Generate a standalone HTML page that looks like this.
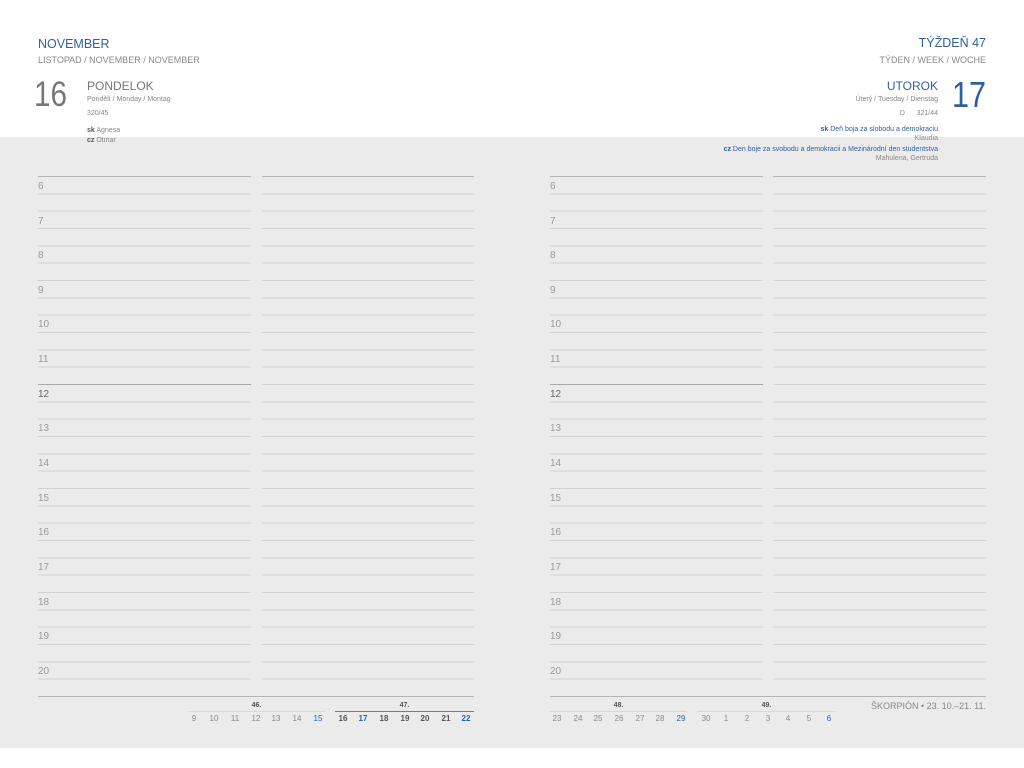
<!DOCTYPE html>
<html><head><meta charset="utf-8"><style>
*{margin:0;padding:0;box-sizing:border-box}
body{width:1024px;height:768px;position:relative;background:#fff;font-family:"Liberation Sans",sans-serif;overflow:hidden;color:#777}
.gray{position:absolute;left:0;top:137px;width:1024px;height:611px;background:#ebebeb}
.a{position:absolute;white-space:nowrap}
.blue{color:#2e5fa3}
.col{position:absolute;top:176px;height:521px;background:repeating-linear-gradient(to bottom,#d2d2d2 0,#d2d2d2 1px,transparent 1px,transparent 17.333px)}
.top{position:absolute;height:1px;background:#b4b4b4}
.hr{position:absolute;font-size:10px;color:#999}
.d{position:absolute;font-size:8px;width:20px;text-align:center;color:#888}
.b{font-weight:bold;color:#555}
.bl{color:#2e5fa3}
</style></head><body>
<div class="gray"></div>
<div class="a blue" style="left:38px;top:37px;font-size:12.5px">NOVEMBER</div>
<div class="a" style="left:38px;top:55px;font-size:9px;color:#888">LISTOPAD / NOVEMBER / NOVEMBER</div>
<div class="a" style="left:34px;top:75px;font-size:35px;color:#777;transform:scaleX(0.85);transform-origin:left">16</div>
<div class="a" style="left:87px;top:79px;font-size:12px;color:#777">PONDELOK</div>
<div class="a" style="left:87px;top:96px;font-size:7px;color:#888">Pondělí / Monday / Montag</div>
<div class="a" style="left:87px;top:110px;font-size:7px;color:#888">320/45</div>
<div class="a" style="left:87px;top:127px;font-size:7px;color:#888"><b style="color:#555">sk</b> Agnesa</div>
<div class="a" style="left:87px;top:137px;font-size:7px;color:#888"><b style="color:#555">cz</b> Otmar</div>

<div class="a blue" style="right:38px;top:36px;font-size:12.5px">TÝŽDEŇ 47</div>
<div class="a" style="right:38px;top:55px;font-size:9px;color:#888">TÝDEN / WEEK / WOCHE</div>
<div class="a blue" style="right:38px;top:74px;font-size:36px;transform:scaleX(0.85);transform-origin:right">17</div>
<div class="a blue" style="right:86px;top:79px;font-size:12px">UTOROK</div>
<div class="a" style="right:86px;top:96px;font-size:7px;color:#888">Úterý / Tuesday / Dienstag</div>
<div class="a" style="right:86px;top:110px;font-size:7px;color:#888">D&nbsp;&nbsp;&nbsp;&nbsp;&nbsp;&nbsp;321/44</div>
<div class="a blue" style="right:86px;top:126px;font-size:7px"><b>sk</b> Deň boja za slobodu a demokraciu</div>
<div class="a" style="right:86px;top:135px;font-size:7px;color:#888">Klaudia</div>
<div class="a blue" style="right:86px;top:146px;font-size:7px"><b>cz</b> Den boje za svobodu a demokracii a Mezinárodní den studentstva</div>
<div class="a" style="right:86px;top:155px;font-size:7px;color:#888">Mahulena, Gertruda</div>

<div class="col" style="left:38px;width:213px"></div>
<div class="col" style="left:262px;width:212px"></div>
<div class="col" style="left:550px;width:213px"></div>
<div class="col" style="left:773px;width:213px"></div>
<div class="top" style="left:38px;top:176px;width:213px"></div>
<div class="top" style="left:262px;top:176px;width:212px"></div>
<div class="top" style="left:550px;top:176px;width:213px"></div>
<div class="top" style="left:773px;top:176px;width:213px"></div>
<div class="top" style="left:38px;top:384px;width:213px;background:#a8a8a8"></div>
<div class="top" style="left:550px;top:384px;width:213px;background:#a8a8a8"></div>
<div class="top" style="left:38px;top:696px;width:436px"></div>
<div class="top" style="left:550px;top:696px;width:436px"></div>

<div class="hr" style="left:38px;top:181px">6</div><div class="hr" style="left:550px;top:181px">6</div>
<div class="hr" style="left:38px;top:216px">7</div><div class="hr" style="left:550px;top:216px">7</div>
<div class="hr" style="left:38px;top:250px">8</div><div class="hr" style="left:550px;top:250px">8</div>
<div class="hr" style="left:38px;top:285px">9</div><div class="hr" style="left:550px;top:285px">9</div>
<div class="hr" style="left:38px;top:319px">10</div><div class="hr" style="left:550px;top:319px">10</div>
<div class="hr" style="left:38px;top:354px">11</div><div class="hr" style="left:550px;top:354px">11</div>
<div class="hr" style="left:38px;top:389px;color:#666">12</div><div class="hr" style="left:550px;top:389px;color:#666">12</div>
<div class="hr" style="left:38px;top:423px">13</div><div class="hr" style="left:550px;top:423px">13</div>
<div class="hr" style="left:38px;top:458px">14</div><div class="hr" style="left:550px;top:458px">14</div>
<div class="hr" style="left:38px;top:493px">15</div><div class="hr" style="left:550px;top:493px">15</div>
<div class="hr" style="left:38px;top:527px">16</div><div class="hr" style="left:550px;top:527px">16</div>
<div class="hr" style="left:38px;top:562px">17</div><div class="hr" style="left:550px;top:562px">17</div>
<div class="hr" style="left:38px;top:597px">18</div><div class="hr" style="left:550px;top:597px">18</div>
<div class="hr" style="left:38px;top:631px">19</div><div class="hr" style="left:550px;top:631px">19</div>
<div class="hr" style="left:38px;top:666px">20</div><div class="hr" style="left:550px;top:666px">20</div>

<div class="a b" style="left:188px;width:137px;text-align:center;top:702px;font-size:7px">46.</div>
<div class="top" style="left:188px;top:711px;width:137px;background:#d8d8d8"></div>
<div class="a b" style="left:335px;width:139px;text-align:center;top:702px;font-size:7px">47.</div>
<div class="top" style="left:335px;top:711px;width:139px;background:#5a7fb5"></div>
<div class="d" style="left:184px;top:714px">9</div><div class="d" style="left:204px;top:714px">10</div><div class="d" style="left:225px;top:714px">11</div><div class="d" style="left:246px;top:714px">12</div><div class="d" style="left:266px;top:714px">13</div><div class="d" style="left:287px;top:714px">14</div><div class="d bl" style="left:308px;top:714px">15</div>
<div class="d b" style="left:333px;top:714px">16</div><div class="d b bl" style="left:353px;top:714px">17</div><div class="d b" style="left:374px;top:714px">18</div><div class="d b" style="left:395px;top:714px">19</div><div class="d b" style="left:415px;top:714px">20</div><div class="d b" style="left:436px;top:714px">21</div><div class="d b bl" style="left:456px;top:714px">22</div>

<div class="a b" style="left:550px;width:137px;text-align:center;top:702px;font-size:7px">48.</div>
<div class="top" style="left:550px;top:711px;width:137px;background:#d8d8d8"></div>
<div class="a b" style="left:697px;width:139px;text-align:center;top:702px;font-size:7px">49.</div>
<div class="top" style="left:697px;top:711px;width:139px;background:#d8d8d8"></div>
<div class="d" style="left:547px;top:714px">23</div><div class="d" style="left:568px;top:714px">24</div><div class="d" style="left:588px;top:714px">25</div><div class="d" style="left:609px;top:714px">26</div><div class="d" style="left:630px;top:714px">27</div><div class="d" style="left:650px;top:714px">28</div><div class="d bl" style="left:671px;top:714px">29</div>
<div class="d" style="left:696px;top:714px">30</div><div class="d" style="left:716px;top:714px">1</div><div class="d" style="left:737px;top:714px">2</div><div class="d" style="left:758px;top:714px">3</div><div class="d" style="left:778px;top:714px">4</div><div class="d" style="left:799px;top:714px">5</div><div class="d bl" style="left:819px;top:714px">6</div>
<div class="a" style="right:38px;top:701px;font-size:9px;color:#888">ŠKORPIÓN • 23. 10.–21. 11.</div>
</body></html>
